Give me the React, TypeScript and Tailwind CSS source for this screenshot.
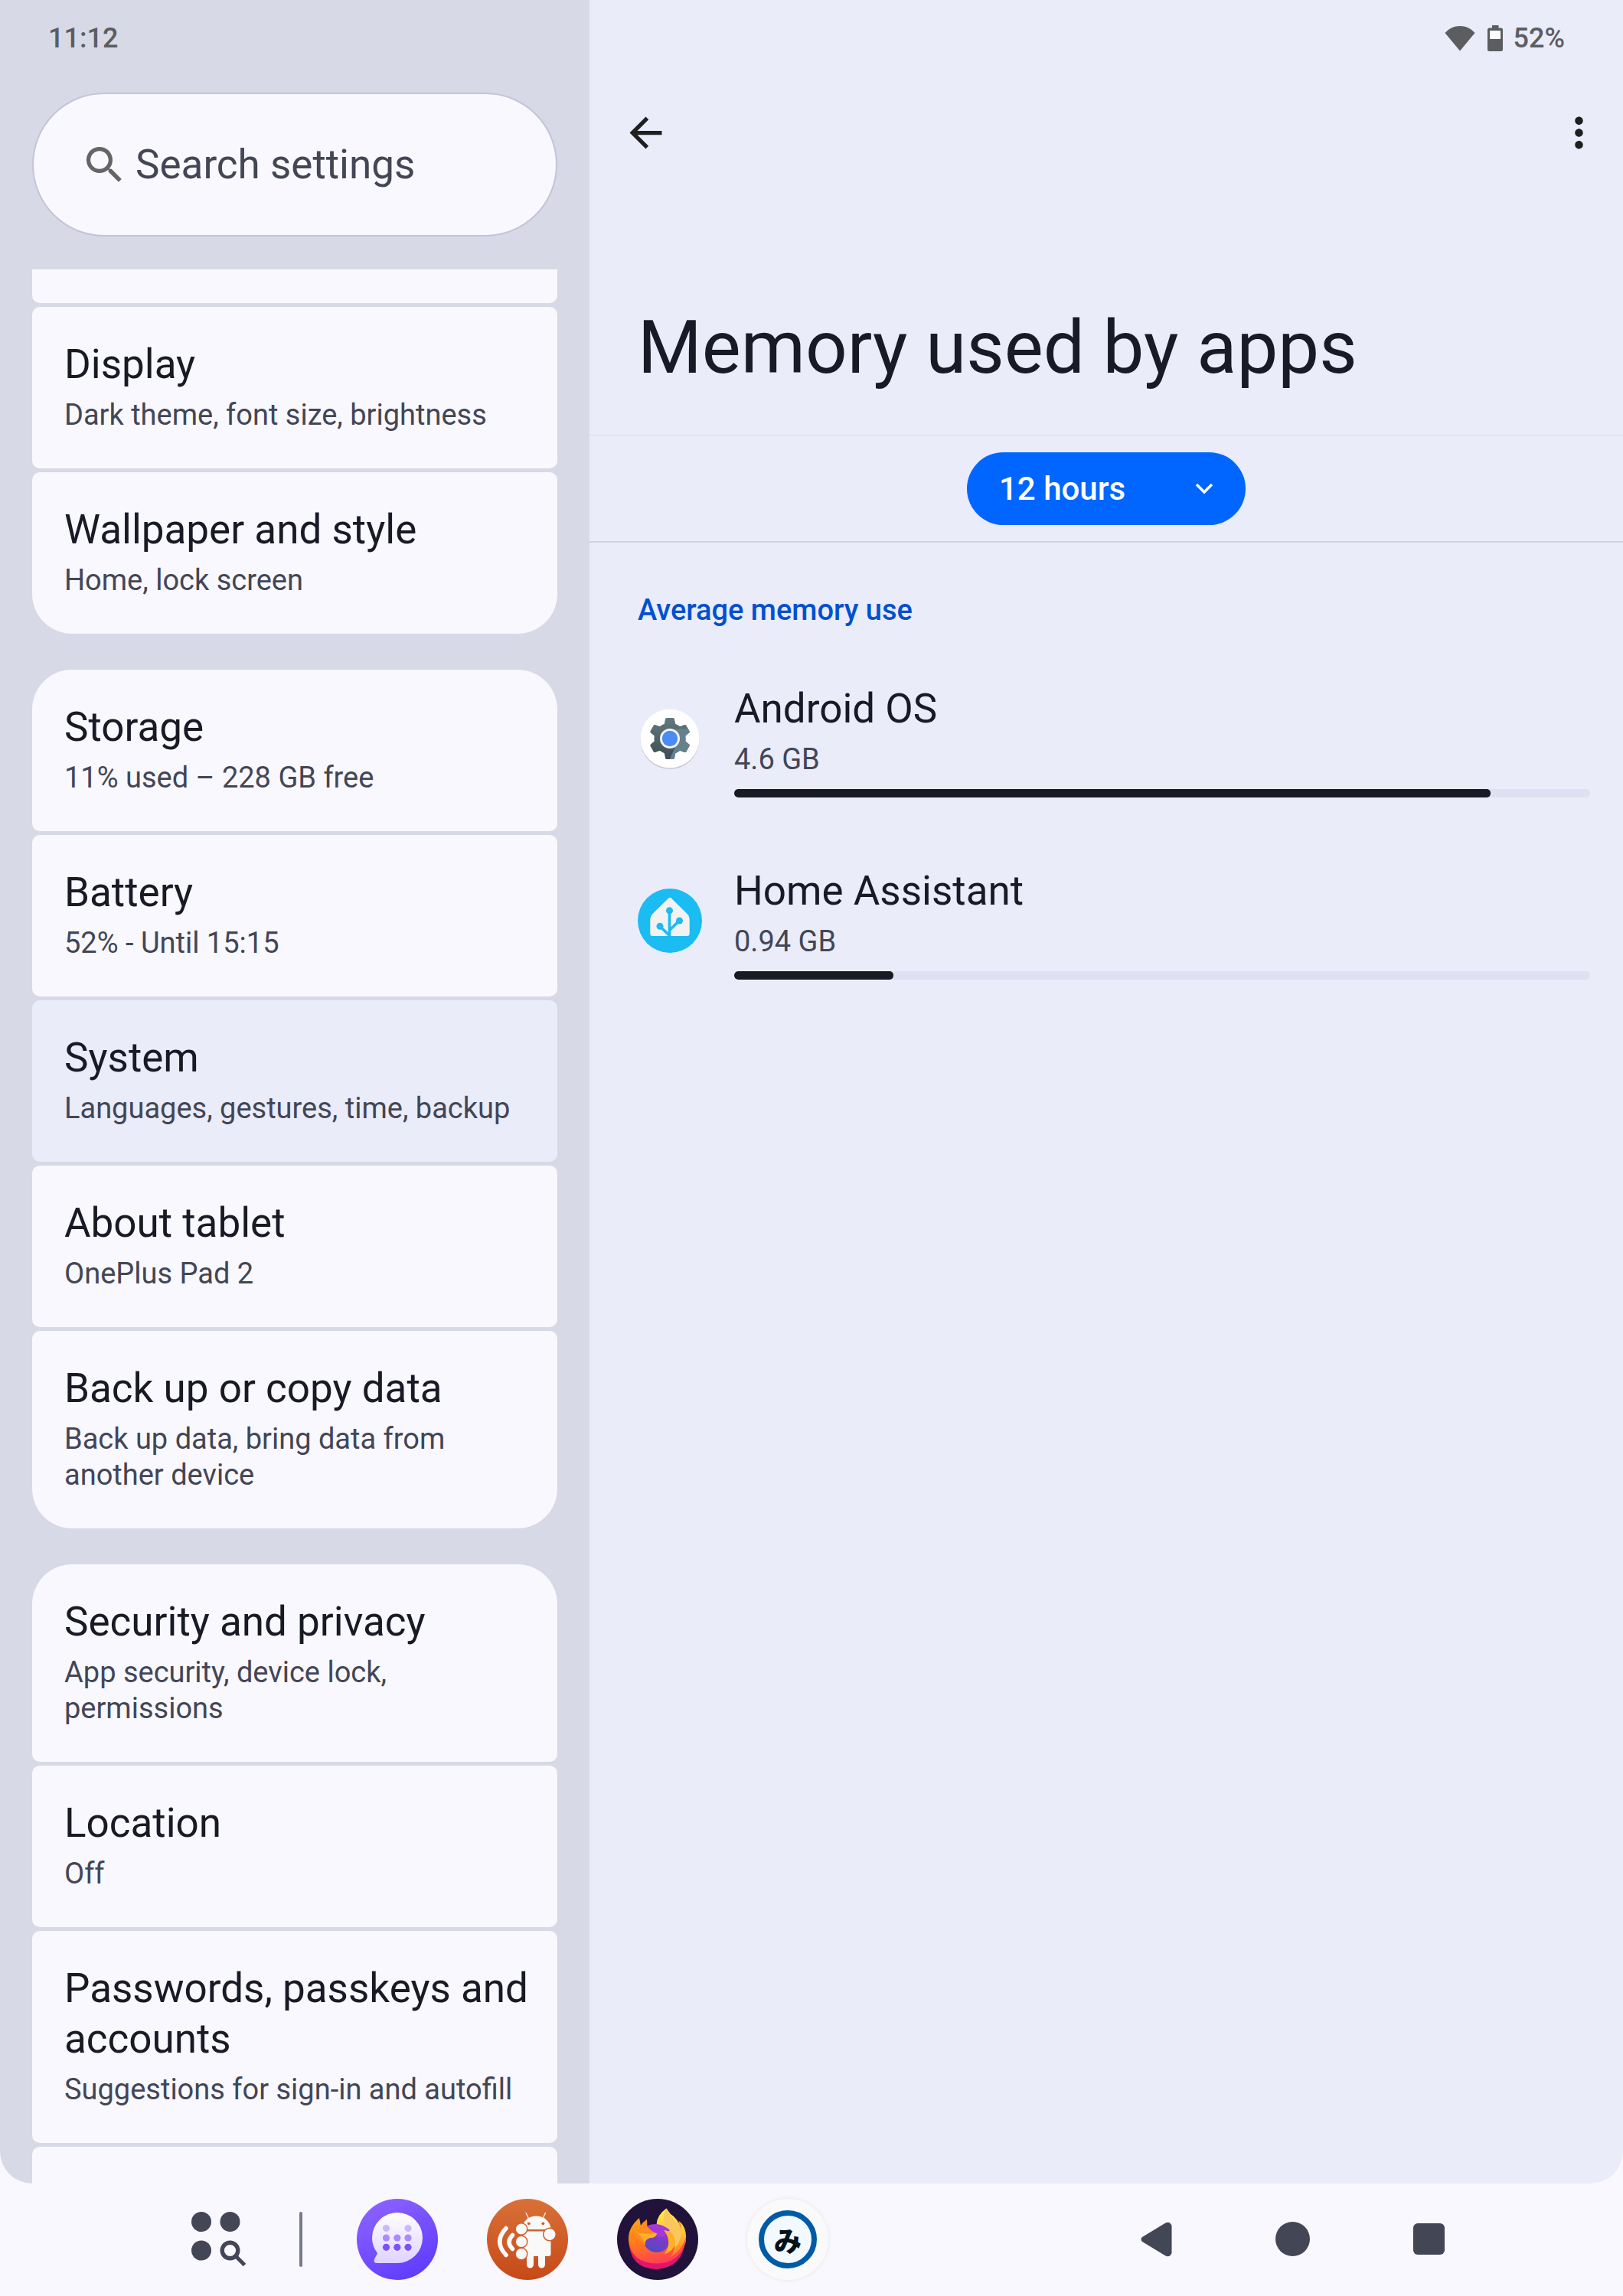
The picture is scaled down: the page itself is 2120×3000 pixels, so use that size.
import type { ReactNode } from "react";
import { MdArrowBack, MdMoreVert, MdSearch } from "react-icons/md";

type Item = { title: string; summary: string; selected?: boolean };

const groups: Item[][] = [
  [
    { title: "Display", summary: "Dark theme, font size, brightness" },
    { title: "Wallpaper and style", summary: "Home, lock screen" },
  ],
  [
    { title: "Storage", summary: "11% used – 228 GB free" },
    { title: "Battery", summary: "52% - Until 15:15" },
    { title: "System", summary: "Languages, gestures, time, backup", selected: true },
    { title: "About tablet", summary: "OnePlus Pad 2" },
    { title: "Back up or copy data", summary: "Back up data, bring data from another device" },
  ],
  [
    { title: "Security and privacy", summary: "App security, device lock, permissions" },
    { title: "Location", summary: "Off" },
    { title: "Passwords, passkeys and accounts", summary: "Suggestions for sign-in and autofill" },
  ],
];

function SettingsItem({ item }: { item: Item }) {
  return (
    <a
      href="#"
      className={`block rounded-[10px] pt-[42px] pr-8 pb-[46px] pl-[42px] ${item.selected ? "bg-[#eaecfa]" : "bg-[#f9f8ff]"}`}
    >
      <div className="text-[53px] leading-[66px] text-[#181a25]">{item.title}</div>
      <div className="mt-[10px] text-[38px] leading-[47px] text-[#434655]">{item.summary}</div>
    </a>
  );
}

function Sidebar() {
  return (
    <aside className="flex w-[770px] shrink-0 flex-col bg-[#d7d9e6] px-[42px]">
      <div className="flex h-[121px] items-start px-[21px] pt-[29px] text-[36px] leading-[42px] font-medium text-[#5c5d61]">
        11:12
      </div>
      <label className="flex h-[188px] shrink-0 items-center rounded-full border-2 border-[#c3c5d8] bg-[#f9f8ff] pr-10 pl-[61px]">
        <MdSearch size={63} className="shrink-0 text-[#656565]" />
        <input
          type="text"
          aria-label="Search settings"
          placeholder="Search settings"
          className="ml-[9px] min-w-0 flex-1 bg-transparent text-[53px] leading-[66px] outline-none placeholder:text-[#434655]"
        />
      </label>
      <nav className="mt-[43px] flex min-h-0 flex-1 flex-col gap-[47px] overflow-hidden">
        {groups.map((items, i) => (
          <div key={i} className="flex shrink-0 flex-col gap-[5px]">
            {i === 0 && <div className="h-11 rounded-b-[10px] bg-[#f9f8ff]" />}
            <div className={`flex flex-col gap-[5px] overflow-hidden ${i === 0 ? "rounded-b-[52px]" : i === 1 ? "rounded-[52px]" : "rounded-t-[52px]"}`}>
              {items.map((item) => (
                <SettingsItem key={item.title} item={item} />
              ))}
            </div>
            {i === 2 && <div className="h-[120px] rounded-t-[10px] bg-[#f9f8ff]" />}
          </div>
        ))}
      </nav>
    </aside>
  );
}

function StatusIcons() {
  return (
    <div className="flex h-[121px] items-start justify-end pt-[29px] pr-[76px] text-[#5c5d61]">
      <svg width="40" height="34" viewBox="0 0 40 34" className="mt-1" fill="currentColor" aria-label="Wi-Fi">
        <path d="M20 33.500 L0.500 10 C6 4 12.500 1 20 1 C27.500 1 34 4 39.500 10 Z" />
      </svg>
      <svg width="20" height="34" viewBox="0 0 20 34" className="mt-1 ml-4" aria-label="Battery">
        <path fill="currentColor" d="M6 0h8.500v3.500H17.500a2.500 2.500 0 0 1 2.500 2.500v25.500a2.500 2.500 0 0 1-2.500 2.500h-15a2.500 2.500 0 0 1-2.500-2.500V6a2.500 2.500 0 0 1 2.500-2.500H6z" />
        <path fill="#fff" d="M3 7h14v11H3z" />
      </svg>
      <span className="ml-[14px] text-[36px] leading-[42px] font-medium">52%</span>
    </div>
  );
}

const gearTeeth = [0, 60, 120, 180, 240, 300];

function AndroidOsIcon() {
  return (
    <svg width="84" height="84" viewBox="0 0 84 84">
      <defs>
        <linearGradient id="gear" gradientUnits="userSpaceOnUse" x1="42" y1="15" x2="42" y2="69">
          <stop offset="0" stopColor="#627880" />
          <stop offset="1" stopColor="#3c4c52" />
        </linearGradient>
        <clipPath id="gearShape">
          <circle cx="42" cy="42" r="20.500" />
          {gearTeeth.map((angle) => (
            <path
              key={angle}
              transform={`rotate(${angle} 42 42)`}
              d="M29 26q5-1 6-4l1-5.500q.3-1.500 1.800-1.500h8.400q1.500 0 1.800 1.500l1 5.500q1 3 6 4L42 42z"
            />
          ))}
        </clipPath>
      </defs>
      <circle cx="42" cy="43.500" r="38.500" fill="#c4c5d2" />
      <circle cx="42" cy="42" r="38.500" fill="#fff" />
      <g clipPath="url(#gearShape)">
        <path fill="url(#gear)" d="M10 10h64v64H10z" />
        <path fill="#66818c" d="M48 29.500H74V74H39.500L49 53z" />
      </g>
      <circle cx="42" cy="42" r="13" fill="#f4f4f4" />
      <circle cx="42" cy="42" r="10.200" fill="#4b8bf5" />
    </svg>
  );
}

function HomeAssistantIcon() {
  return (
    <svg width="84" height="84" viewBox="0 0 84 84">
      <circle cx="42" cy="42" r="42" fill="#1abcf2" />
      <path fill="#f2f2f2" d="M40 12.700q2-2 4 0L65 33.500q2.700 2.700 2.700 6.500v19q0 3-3 3H19.300q-3 0-3-3V40q0-3.800 2.700-6.500z" />
      <path d="M41.500 28v35M42 54l12.300-12M42 62L29 49.300" stroke="#1abcf2" strokeWidth="3.600" fill="none" />
      <g fill="#1abcf2">
        <circle cx="41.500" cy="28.700" r="4.500" />
        <circle cx="54.500" cy="42" r="4.500" />
        <circle cx="29" cy="49.300" r="4.500" />
      </g>
    </svg>
  );
}

const apps: { name: string; memory: string; share: number; icon: ReactNode }[] = [
  { name: "Android OS", memory: "4.6 GB", share: 88.4, icon: <AndroidOsIcon /> },
  { name: "Home Assistant", memory: "0.94 GB", share: 18.6, icon: <HomeAssistantIcon /> },
];

function MemoryPane() {
  return (
    <main className="flex min-w-0 flex-1 flex-col bg-[#eaecfa]">
      <StatusIcons />
      <div className="flex h-[105px] items-center justify-between pr-[26px] pl-[42px] text-[#1f1f1f]">
        <button type="button" aria-label="Back">
          <MdArrowBack size={63} />
        </button>
        <button type="button" aria-label="More options">
          <MdMoreVert size={63} />
        </button>
      </div>
      <h1 className="px-[63px] pt-[168px] pb-[54px] text-[96px] leading-[120px] text-[#181a25]">Memory used by apps</h1>
      <div className="flex h-[141px] items-center justify-center border-t-2 border-b-2 border-t-[#e0e2f1] border-b-[#d0d2e0]">
        <div className="relative">
          <select
            aria-label="Time range"
            className="h-[95px] w-[364px] appearance-none rounded-full bg-[#0066ff] px-[42px] text-[42px] font-medium text-white"
          >
            <option>12 hours</option>
          </select>
          <svg width="24" height="16" viewBox="0 0 24 16" className="pointer-events-none absolute top-10 right-[42px]">
            <path d="M2 2l10 10L22 2" fill="none" stroke="#fff" strokeWidth="3.500" />
          </svg>
        </div>
      </div>
      <h2 className="px-[63px] pt-[65px] text-[38px] leading-[47px] font-medium text-[#0050d0]">Average memory use</h2>
      <ul className="mt-[72px] flex flex-col gap-[89px] pr-[43px] pl-[63px]">
        {apps.map((app) => (
          <li key={app.name} className="flex gap-[42px]">
            <div className="mt-[30px] h-[84px] w-[84px] shrink-0">{app.icon}</div>
            <div className="min-w-0 flex-1">
              <div className="text-[53px] leading-[66px] text-[#181a25]">{app.name}</div>
              <div className="mt-[10px] text-[38px] leading-[47px] text-[#434655]">{app.memory}</div>
              <div className="mt-[15px] h-[11px] overflow-hidden rounded-[5px] bg-[#dfe1f2]">
                <div className="h-full rounded-[5px] bg-[#181a25]" style={{ width: `${app.share}%` }} />
              </div>
            </div>
          </li>
        ))}
      </ul>
    </main>
  );
}

function AllAppsIcon() {
  return (
    <svg width="72" height="72" viewBox="0 0 72 72" fill="#434655">
      <circle cx="13" cy="13" r="13" />
      <circle cx="50.500" cy="13" r="13" />
      <circle cx="13" cy="50.500" r="13" />
      <circle cx="50.500" cy="50.500" r="10.300" fill="none" stroke="#434655" strokeWidth="5.400" />
      <path d="M58 58L69.500 69.500" stroke="#434655" strokeWidth="5" />
    </svg>
  );
}

function MessagesIcon() {
  const rows = [
    { y: 38.5, fill: "#c9b8ff", xs: [38.5, 67] },
    { y: 51, fill: "#a98bff", xs: [38.5, 52.8, 67] },
    { y: 63.3, fill: "#7a52fb", xs: [38.5, 52.8, 67] },
  ];
  return (
    <svg width="106" height="106" viewBox="0 0 106 106">
      <defs>
        <linearGradient id="msgBg" x1="0.200" y1="0" x2="0.700" y2="1">
          <stop offset="0" stopColor="#8c63ff" />
          <stop offset="1" stopColor="#5f3cff" />
        </linearGradient>
        <linearGradient id="msgBubble" x1="0" y1="0" x2="0" y2="1">
          <stop offset="0" stopColor="#fff" />
          <stop offset="1" stopColor="#dfd3ff" />
        </linearGradient>
      </defs>
      <circle cx="53" cy="53" r="53" fill="url(#msgBg)" />
      <path
        fill="url(#msgBubble)"
        d="M53 18a33 33 0 0 1 0 66H26.500q-5 0-3.500-5l4-8Q20 62 20 51A33 33 0 0 1 53 18z"
      />
      {rows.map((row) => row.xs.map((x) => <circle key={`${x}-${row.y}`} cx={x} cy={row.y} r="4.600" fill={row.fill} />))}
    </svg>
  );
}

function RobotIcon() {
  return (
    <svg width="106" height="106" viewBox="0 0 106 106">
      <defs>
        <linearGradient id="robotBg" x1="0" y1="0" x2="0" y2="1">
          <stop offset="0" stopColor="#d97038" />
          <stop offset="1" stopColor="#c64a18" />
        </linearGradient>
      </defs>
      <circle cx="53" cy="53" r="53" fill="url(#robotBg)" />
      <g fill="#f9f9f9">
        <path d="M45.500 40a19 17.500 0 0 1 38 0z" />
        <path d="M47 42.500h36.500v29.500q0 3-3 3H76v11a4.500 4.500 0 0 1-9 0V75h-6v11a4.500 4.500 0 0 1-9 0V75h-5z" />
      </g>
      <g fill="none" stroke="#f9f9f9" strokeLinecap="round">
        <path d="M54 24.500l-3-6M73.500 24.500l3-6" strokeWidth="1.300" />
        <path d="M25 38.500Q8.500 56 25 73.500" strokeWidth="5.500" />
        <path d="M33.500 47.500Q24.500 56.500 33.500 65.500" strokeWidth="5.500" />
      </g>
      <g fill="#f9f9f9" stroke="#d0602c" strokeWidth="1.500">
        <circle cx="45" cy="39.500" r="7.800" />
        <circle cx="45" cy="56" r="7.800" />
        <circle cx="45" cy="72" r="7.800" />
        <circle cx="82" cy="46.500" r="8.300" />
      </g>
      <circle cx="54.800" cy="32.300" r="1.900" fill="#d0602c" />
      <circle cx="73.400" cy="32.300" r="1.900" fill="#d0602c" />
    </svg>
  );
}

function FirefoxIcon() {
  return (
    <svg width="106" height="106" viewBox="0 0 106 106">
      <defs>
        <linearGradient id="foxBody" x1="0.300" y1="0" x2="0.600" y2="1">
          <stop offset="0" stopColor="#ffa114" />
          <stop offset="0.450" stopColor="#ff7a1c" />
          <stop offset="1" stopColor="#ff3d55" />
        </linearGradient>
        <linearGradient id="foxTail" x1="0" y1="0" x2="0" y2="1">
          <stop offset="0" stopColor="#fff04a" />
          <stop offset="0.500" stopColor="#ffc637" />
          <stop offset="1" stopColor="#ff7a1c" />
        </linearGradient>
        <linearGradient id="foxGlobe" x1="0.700" y1="0" x2="0.300" y2="1">
          <stop offset="0" stopColor="#b833e1" />
          <stop offset="0.500" stopColor="#7a3bc8" />
          <stop offset="1" stopColor="#4f4bc0" />
        </linearGradient>
      </defs>
      <circle cx="53" cy="53" r="53" fill="#20123a" />
      <path fill="#e3156b" d="M15 50Q15 92 52 92Q84 90 89 57L60 70z" />
      <path fill="url(#foxBody)" d="M29 25Q14 38 15 54Q18 84 52 84.500Q82 84 90 56Q92 40 81 29L70 60L40 52L39 27Q34 30 31 35z" />
      <path fill="url(#foxTail)" d="M64.500 12.500Q52 21 51.500 34Q67 38 74 50Q78 64 70 76Q84 68 90 50Q90 36 81 29Q85 35 83 39Q80 26 70 20z" />
      <path fill="#fbc65c" d="M64.500 12.500Q58 24 64 36Q76 50 76 64Q88 48 81 35Q74 27 70 22z" />
      <circle cx="52" cy="52" r="18" fill="url(#foxGlobe)" />
      <path fill="#a536dc" d="M40 35Q55 29 69 41L60 50L42 48z" />
      <path fill="#ffb02a" d="M61 41Q75 42 76 56Q75 68 62 72Q73 56 61 41z" />
      <path fill="#ff8a1f" d="M31 35L39 27L39 35Q44 43 52 45Q51 51 43 51Q36 53 37 61L26 50z" />
      <path fill="#ffb327" d="M25 44Q36 47 52 45Q51 51 43 51Q37 53 36 57Q32 48 25 44z" />
    </svg>
  );
}

function MinnanoIcon() {
  return (
    <div className="flex h-[106px] w-[106px] items-center justify-center rounded-full bg-[#fafafa] shadow-[0_0_6px_rgba(0,0,0,0.08)]">
      <div className="flex h-[76px] w-[76px] items-center justify-center rounded-full border-[7px] border-[#005aa5] bg-[#f2f9ff] font-['Noto_Sans_CJK_JP',sans-serif] text-[36px] leading-none font-black text-[#04121c]">
        み
      </div>
    </div>
  );
}

const dockApps = [
  { label: "Messages", icon: <MessagesIcon /> },
  { label: "Remote control", icon: <RobotIcon /> },
  { label: "Firefox", icon: <FirefoxIcon /> },
  { label: "Dictionary", icon: <MinnanoIcon /> },
];

function Taskbar() {
  return (
    <footer className="flex h-[147px] shrink-0 items-center justify-between pr-[233px] pb-[2px] pl-[250px]">
      <div className="flex items-center">
        <button type="button" aria-label="All apps">
          <AllAppsIcon />
        </button>
        <div className="ml-[69px] h-[72px] w-1 rounded-full bg-[#777a8b]" />
        <div className="ml-[71px] flex gap-16">
          {dockApps.map((app) => (
            <button key={app.label} type="button" aria-label={app.label}>
              {app.icon}
            </button>
          ))}
        </div>
      </div>
      <div className="flex items-center gap-[135px] text-[#434655]">
        <button type="button" aria-label="Back">
          <svg width="41" height="46" viewBox="0 0 41 46" fill="currentColor">
            <path d="M2 20L32.500 1.500Q38-1 40.500 5V41Q38 47 32.500 44.500L2 26Q-1 23 2 20z" />
          </svg>
        </button>
        <button type="button" aria-label="Home" className="h-[45px] w-[45px] rounded-full bg-current" />
        <button type="button" aria-label="Recent apps" className="h-[41px] w-[41px] rounded-[6px] bg-current" />
      </div>
    </footer>
  );
}

export default function App() {
  return (
    <div className="flex h-screen flex-col overflow-hidden bg-[#f9f8ff] font-[Roboto,sans-serif]">
      <div className="flex min-h-0 flex-1 overflow-hidden rounded-b-[42px]">
        <Sidebar />
        <MemoryPane />
      </div>
      <Taskbar />
    </div>
  );
}
